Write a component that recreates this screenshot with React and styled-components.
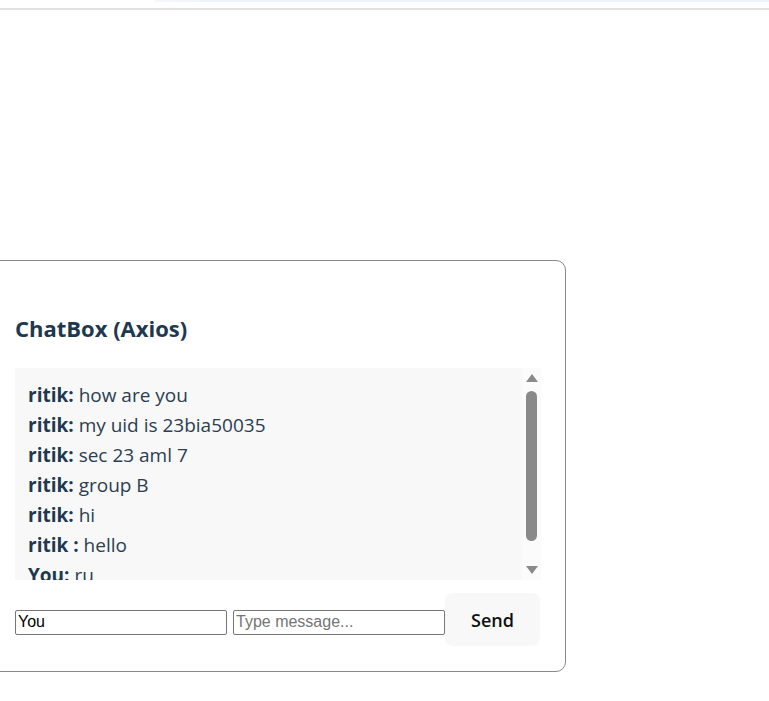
import { useState } from "react"
import styled, { createGlobalStyle } from "styled-components"

const GlobalStyle = createGlobalStyle`
  body {
    margin: 0;
    background: #ffffff;
    font-family: "Open Sans", "Noto Sans", sans-serif;
    overflow: hidden;
  }
`

const initialMessages = [
  { user: "ritik", text: "how are you" },
  { user: "ritik", text: "my uid is 23bia50035" },
  { user: "ritik", text: "sec 23 aml 7" },
  { user: "ritik", text: "group B" },
  { user: "ritik", text: "hi" },
  { user: "ritik ", text: "hello" },
  { user: "You", text: "ru" },
]

const App = () => {
  const [messages, setMessages] = useState(initialMessages)
  const [name, setName] = useState("You")
  const [draft, setDraft] = useState("")

  const sendMessage = (e) => {
    e.preventDefault()
    if (!draft.trim()) return
    setMessages([...messages, { user: name, text: draft }])
    setDraft("")
  }

  return (
    <>
      <GlobalStyle />
      <TopStrip>
        <TopGlow />
      </TopStrip>
      <Page>
        <Card>
          <Title>ChatBox (Axios)</Title>
          <MessageBox>
            <MessageList>
              {messages.map((m, i) => (
                <MessageLine key={i}>
                  <Sender>{m.user}:</Sender> {m.text}
                </MessageLine>
              ))}
            </MessageList>
            {/* drawn scrollbar, the headless browser hides native ones */}
            <ScrollTrack>
              <ScrollArrow $dir="up" />
              <ScrollThumb />
              <ScrollArrow $dir="down" />
            </ScrollTrack>
          </MessageBox>
          <InputRow onSubmit={sendMessage}>
            <TextInput value={name} onChange={(e) => setName(e.target.value)} />
            <TextInput
              placeholder="Type message..."
              value={draft}
              onChange={(e) => setDraft(e.target.value)}
            />
            <SendButton type="submit">Send</SendButton>
          </InputRow>
        </Card>
      </Page>
    </>
  )
}

const TopStrip = styled.div`
  height: 8px;
  border-bottom: 2px solid #e2e2e2;
  display: flex;
  justify-content: flex-end;
`
const TopGlow = styled.div`
  width: 614px;
  height: 2px;
  background: linear-gradient(90deg, #f4f6fb, #eef2fa 10%, #eef2fa);
`
const Page = styled.main`
  padding-top: 250px;
`
const Card = styled.section`
  width: 576px;
  margin-left: -10px;
  padding: 24px 24px 25px;
  border: 1px solid #888888;
  border-radius: 10px;
  box-sizing: border-box;
`
const Title = styled.h2`
  margin: 29px 0 26px;
  font-size: 22px;
  line-height: 28px;
  font-weight: 700;
  color: #1e3850;
`
const MessageBox = styled.div`
  display: flex;
  height: 212px;
  background: #f8f8f8;
`
const MessageList = styled.div`
  flex: 1;
  overflow: hidden;
  padding: 12px 13px;
`
const MessageLine = styled.div`
  font-size: 19px;
  line-height: 30px;
  color: #2c3e50;
  white-space: pre;
`
const Sender = styled.strong`
  font-weight: 700;
  color: #1e3850;
`
const ScrollTrack = styled.div`
  width: 19px;
  background: #fbfbfb;
  display: flex;
  flex-direction: column;
  align-items: center;
  padding: 6px 0 6px;
  box-sizing: border-box;
`
const ScrollArrow = styled.div`
  width: 0;
  height: 0;
  border-left: 6px solid transparent;
  border-right: 6px solid transparent;
  ${({ $dir }) =>
    $dir === "up"
      ? "border-bottom: 8px solid #8a8a8a;"
      : "border-top: 8px solid #8a8a8a;"}
`
const ScrollThumb = styled.div`
  width: 11px;
  height: 150px;
  margin: 9px 0 auto;
  border-radius: 6px;
  background: #8a8a8a;
`
const InputRow = styled.form`
  display: flex;
  align-items: baseline;
  margin-top: 13px;
`
const TextInput = styled.input`
  width: 212px;
  height: 25px;
  box-sizing: border-box;
  padding: 0 2px 2px;
  border: 1px solid #767676;
  border-radius: 2px;
  font-family: "Liberation Sans", Arial, sans-serif;
  font-size: 16px;
  color: #000;

  & + & {
    margin-left: 6px;
  }

  &::placeholder {
    color: #757575;
  }
`
const SendButton = styled.button`
  width: 95px;
  height: 53px;
  border: none;
  border-radius: 8px;
  background: #f8f8f8;
  font-family: "Open Sans", "Noto Sans", sans-serif;
  font-size: 18px;
  font-weight: 600;
  color: #111111;
  cursor: pointer;
`

export default App
